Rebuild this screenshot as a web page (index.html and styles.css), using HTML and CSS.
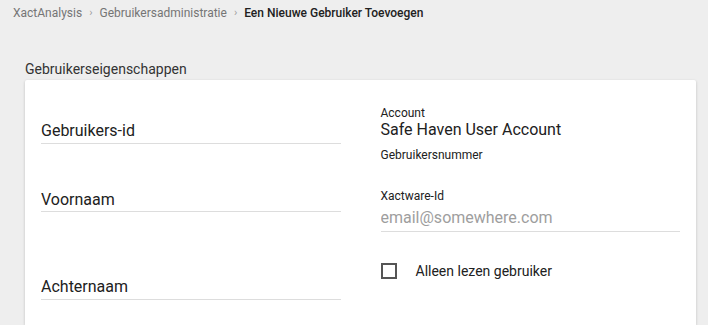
FILE: index.html
```html
<!DOCTYPE html>
<html lang="en">
<head>
    <meta charset="UTF-8">
    <title>Een Nieuwe Gebruiker Toevoegen</title>
    <link rel="stylesheet" href="styles.css">
</head>
<body>

    <div class="breadcrumb">
        <span class="crumb">XactAnalysis</span>
        <span class="sep">&#8250;</span>
        <span class="crumb">Gebruikersadministratie</span>
        <span class="sep">&#8250;</span>
        <span class="crumb current">Een Nieuwe Gebruiker Toevoegen</span>
    </div>

    <div class="section-title">Gebruikerseigenschappen</div>

    <div class="card">
        <div class="col col-left">
            <div class="field first">
                <input type="text" class="line-input" value="Gebruikers-id">
            </div>
            <div class="field second">
                <input type="text" class="line-input" value="Voornaam">
            </div>
            <div class="field third">
                <input type="text" class="line-input" value="Achternaam">
            </div>
        </div>

        <div class="col col-right">
            <div class="small-label">Account</div>
            <div class="value">Safe Haven User Account</div>
            <div class="small-label nummer">Gebruikersnummer</div>

            <div class="small-label xid">Xactware-Id</div>
            <input type="text" class="line-input email" placeholder="email@somewhere.com">

            <label class="check-row">
                <span class="box"></span>
                <span class="check-text">Alleen lezen gebruiker</span>
            </label>
        </div>
    </div>

</body>
</html>
```

FILE: styles.css
```css
body {
    font-family: Roboto, "Liberation Sans", sans-serif;
    background-color: #eeeeee;
    color: #212121;
    margin: 0;
    padding: 0;
    overflow: hidden;
}
.breadcrumb {
    display: flex;
    align-items: center;
    gap: 7px;
    padding: 5px 13px 0;
    height: 16px;
    font-size: 12px;
    line-height: 16px;
}
.crumb {
    color: #757575;
}
.crumb.current {
    color: #212121;
    font-weight: 500;
}
.sep {
    color: #9e9e9e;
    font-size: 11px;
}
.section-title {
    margin: 40px 0 0 25px;
    font-size: 14px;
    line-height: 16px;
    color: #333333;
}
.card {
    display: flex;
    gap: 40px;
    margin: 3px 12px 0 25px;
    padding: 0 16px;
    height: 245px;
    background: #ffffff;
    border-radius: 2px 2px 0 0;
    box-shadow: 0 1px 3px rgba(0, 0, 0, 0.2);
}
.col {
    width: 300px;
    display: flex;
    flex-direction: column;
}
.line-input {
    display: block;
    width: 100%;
    box-sizing: border-box;
    padding: 0 0 3px;
    border: none;
    border-bottom: 1px solid #dddddd;
    outline: none;
    font-family: inherit;
    font-size: 16px;
    line-height: 20px;
    height: 24px;
    color: #212121;
    background: transparent;
}
.line-input::placeholder {
    color: #9e9e9e;
}
.field.first {
    margin-top: 40px;
}
.field.second {
    margin-top: 45px;
}
.field.third {
    margin-top: 64px;
}
.field.second .line-input {
    padding-bottom: 2px;
    height: 23px;
}
.small-label {
    font-size: 12px;
    line-height: 14px;
    color: #212121;
}
.col-right > .small-label:first-child {
    margin-top: 26px;
}
.value {
    font-size: 16px;
    line-height: 20px;
}
.nummer {
    margin-top: 8px;
}
.xid {
    margin-top: 27px;
}
.email {
    margin-top: 4px;
    height: 25px;
    padding-bottom: 4px;
}
.check-row {
    display: flex;
    align-items: center;
    margin-top: 31px;
    font-size: 14px;
    line-height: 16px;
}
.box {
    width: 16px;
    height: 16px;
    box-sizing: border-box;
    border: 2px solid #555555;
    margin-right: 19px;
}
```
